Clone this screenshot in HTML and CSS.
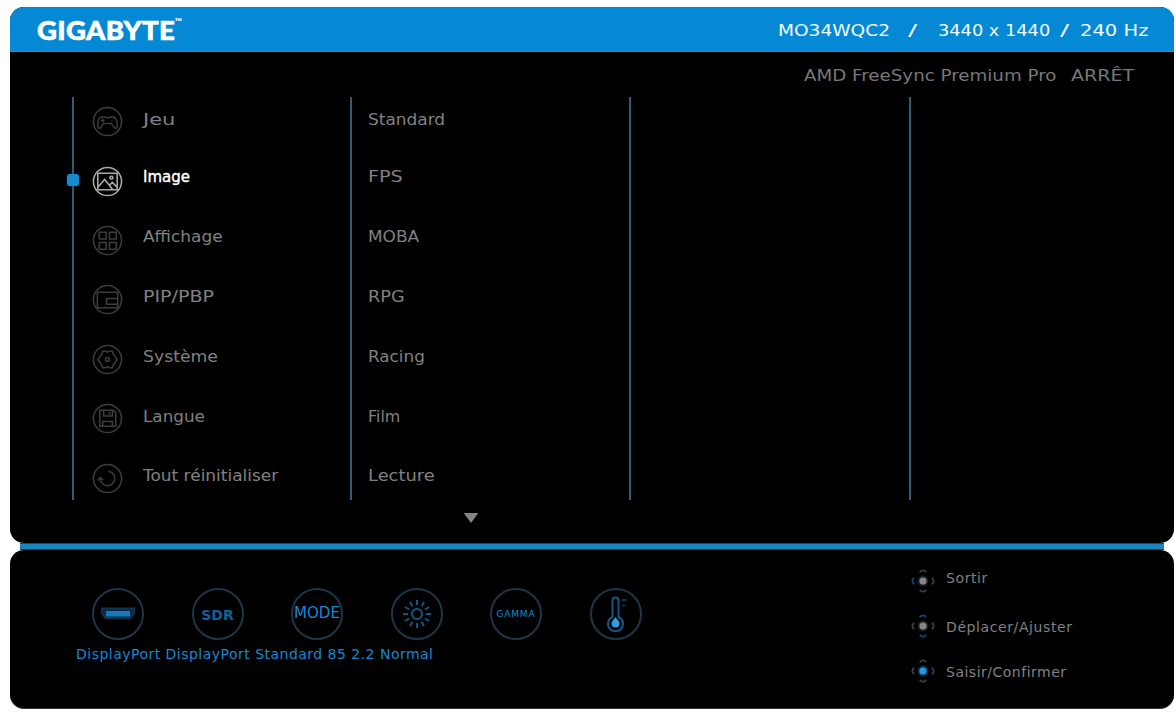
FILE: index.html
```html
<!DOCTYPE html>
<html lang="fr">
<head>
<meta charset="utf-8">
<title>GIGABYTE MO34WQC2</title>
<link rel="stylesheet" href="styles.css">
</head>
<body>
<main class="osd">
  <section class="panel">
    <header class="header">
      <div class="brand">GIGABYTE<span class="tm">™</span></div>
      <div class="signal"><span class="model">MO34WQC2</span><span class="slash">/</span><span class="res">3440 x 1440</span><span class="slash">/</span><span class="rate">240 Hz</span></div>
    </header>
    <div class="sync"><span class="sync-name">AMD FreeSync Premium Pro</span><span class="sync-state">ARRÊT</span></div>
    <div class="menu">
      <div class="col main-col">
        <i class="marker"></i>
        <div class="icons">
          <svg viewBox="0 0 32 32"><circle cx="16" cy="16" r="14.5"/><path d="M6 21c0-5 1-10 4-10 2 0 3 1 6 1s4-1 6-1c3 0 4 5 4 10 0 3-3 2-4 0l-2-3h-8l-2 3c-1 2-4 3-4 0zM9 15h4M11 13v4M20 15h1M22 13h1"/></svg>
          <svg class="on" viewBox="0 0 32 32"><circle cx="16" cy="16" r="14.5"/><path d="M6 7.500h20v17H6zM6 22l7-8 5 6 3-3 5 5M14.500 15.500l7 9"/><circle cx="20" cy="12" r="1.500"/></svg>
          <svg viewBox="0 0 32 32"><circle cx="16" cy="16" r="14.500"/><path d="M7.500 7.500h7v7h-7zM18 7.500h7v7h-7zM7.500 18h7v7h-7zM18 18h7v7h-7z"/></svg>
          <svg viewBox="0 0 32 32"><circle cx="16" cy="16" r="14.500"/><path d="M5.500 8.500h21v16h-21zM15 15h11.500v6H15z"/></svg>
          <svg viewBox="0 0 32 32"><circle cx="16" cy="16" r="14.500"/><path d="M11 7.500h3l2 1 2-1h3l1 3 4 5.500-4 5.500-1 3h-3l-2-1-2 1h-3l-1-3L6 16l4-5.500z"/><circle cx="16" cy="16" r="2"/></svg>
          <svg viewBox="0 0 32 32"><circle cx="16" cy="16" r="14.500"/><path d="M8 7.500h14l2.500 2.500v14H8zM12 7.500v6h9v-6M11 24v-5h10v5M18 9v3"/></svg>
          <svg viewBox="0 0 32 32"><circle cx="16" cy="16" r="14.500"/><path d="M17 8.500A7.500 7.500 0 1 1 8.500 16M6 18l2.500-3 3 2.500"/></svg>
        </div>
        <ul class="list labels">
          <li>Jeu</li><li class="on">Image</li><li>Affichage</li><li>PIP/PBP</li><li>Système</li><li>Langue</li><li>Tout réinitialiser</li>
        </ul>
      </div>
      <div class="col mode-col">
        <ul class="list modes">
          <li>Standard</li><li>FPS</li><li>MOBA</li><li>RPG</li><li>Racing</li><li>Film</li><li>Lecture</li>
        </ul>
      </div>
      <div class="col"></div>
      <div class="col"></div>
    </div>
    <div class="more"><svg viewBox="0 0 16 11"><path d="M0 0h16L8 11z"/></svg></div>
  </section>
  <div class="divider"></div>
  <section class="footer">
    <div class="status">
      <div class="badges">
        <div class="badge"><svg viewBox="0 0 52 52"><path class="glow" d="M10 20.500h32v5L38.500 30h-25L10 25.500z"/><path class="port" d="M15 24h22v3.500H15z"/></svg></div>
        <div class="badge sdr">SDR</div>
        <div class="badge mode">MODE</div>
        <div class="badge"><svg class="sun" viewBox="0 0 52 52"><circle cx="26" cy="26" r="5"/><path d="M26 12v5M26 35v5M12 26h5M35 26h5M19 13.900l2.500 4.300M30.500 33.800l2.500 4.300M13.900 19l4.300 2.500M33.800 30.500l4.300 2.500M13.900 33l4.300-2.500M33.800 21.500l4.300-2.500M19 38.100l2.500-4.300M30.500 18.200l2.500-4.300"/></svg></div>
        <div class="badge gamma">GAMMA</div>
        <div class="badge"><svg class="therm" viewBox="0 0 52 52"><path d="M22.500 29V12.500a3 3 0 0 1 6 0V29a7.500 7.500 0 1 1-6 0z"/><path class="faint" d="M32 12h5M32 17.500h3"/><path class="drop" d="M25.500 29c2 3 4 4 4 6.500a4 4 0 0 1-8 0c0-2.500 2-3.500 4-6.500z"/></svg></div>
      </div>
      <div class="values">DisplayPort DisplayPort Standard 85 2.2 Normal</div>
    </div>
    <ul class="keys">
      <li><svg viewBox="0 0 28 28"><circle cx="14" cy="14" r="4.800"/><path d="M10.500 4.500q3.500-4 7 0M10.500 23.500q3.500 4 7 0M23.500 10.500q4 3.500 0 7"/><path class="lit" d="M4.500 10.500q-4 3.500 0 7"/></svg><span>Sortir</span></li>
      <li><svg viewBox="0 0 28 28"><circle cx="14" cy="14" r="4.800"/><path d="M4.500 10.500q-4 3.500 0 7M23.500 10.500q4 3.500 0 7"/><path class="lit" d="M10.500 4.500q3.500-4 7 0M10.500 23.500q3.500 4 7 0"/></svg><span>Déplacer/Ajuster</span></li>
      <li><svg viewBox="0 0 28 28"><circle class="ok" cx="14" cy="14" r="4.800"/><path d="M10.500 4.500q3.500-4 7 0M10.500 23.500q3.500 4 7 0M23.500 10.500q4 3.500 0 7M4.500 10.500q-4 3.500 0 7"/></svg><span>Saisir/Confirmer</span></li>
    </ul>
  </section>
</main>
</body>
</html>
```
FILE: styles.css
```css
* { box-sizing: border-box; }
body { margin: 0; background: #fff; font-family: "DejaVu Sans", sans-serif; color: #808080; }
ul { margin: 0; padding: 0; list-style: none; }
span, li, .badge, .values { white-space: nowrap; }
svg { display: block; fill: none; }

.osd { width: 1176px; height: 712px; padding: 7px 2px 3px 10px; overflow: hidden; }
.panel { height: 536px; background: #000; border-radius: 14px; overflow: hidden; }
.header { height: 45px; padding: 0 26px 0 27px; background: #0589d5; border-bottom: 1px solid #3d88b0; display: flex; justify-content: space-between; align-items: center; color: #fff; }
.brand { display: flex; padding-top: 1px; font: 900 26px/30px Lato, sans-serif; letter-spacing: .3px; transform: scaleX(1.06); transform-origin: left; -webkit-text-stroke: .6px #fff; }
.tm { font-size: 9px; line-height: 13px; -webkit-text-stroke: 0; }
.signal { display: flex; padding-top: 4px; font-size: 16px; line-height: 20px; color: #f4faff; }
.signal span, .sync span, .list li { transform-origin: left; }
.model { width: 130px; transform: scaleX(1.16); }
.slash { width: 30px; transform: scaleX(1.7); }
.res { width: 122px; transform: scaleX(1.11); }
.res + .slash { width: 20px; }
.rate { width: 68px; transform: scaleX(1.22); }

.sync { height: 39px; padding: 14px 39px 0 0; display: flex; justify-content: flex-end; font-size: 16px; line-height: 20px; color: #777; }
.sync-name { width: 267px; transform: scaleX(1.14); }
.sync-state { width: 64px; transform: scaleX(1.19); }

.menu { margin: 6px 0 0 62px; height: 403px; display: grid; grid-template: 403px / 278px 279px 280px 1fr; }
.col { border-left: 2px solid #315c78; }
.main-col { position: relative; display: flex; padding-left: 18px; }
.marker { position: absolute; left: -7px; top: 77px; width: 12px; height: 12px; border-radius: 3px; background: #178bd0; box-shadow: 0 0 3px #0a3c60; }
.icons { width: 51px; margin-top: -5px; display: grid; grid-auto-rows: 59.4px; align-content: start; align-items: center; }
.icons svg { width: 31px; height: 31px; stroke: #3c3c3c; stroke-width: 1.6; }
.icons svg.on { stroke: #aaa; }
.list { margin-top: -5px; display: grid; grid-template-rows: 55px repeat(6, 59.9px); align-content: start; align-items: center; font-size: 15px; line-height: 20px; }
.list li { justify-self: start; }
.list .on { color: #fff; -webkit-text-stroke: .4px #fff; }
.mode-col { padding-left: 16px; }
.labels li:nth-child(1) { transform: scaleX(1.4); }
.labels li:nth-child(3) { transform: scaleX(1.13); }
.labels li:nth-child(4) { transform: scaleX(1.27); }
.labels li:nth-child(5) { transform: scaleX(1.15); }
.labels li:nth-child(6) { transform: scaleX(1.12); }
.labels li:nth-child(7) { transform: scaleX(1.13); }
.modes li:nth-child(1) { transform: scaleX(1.13); }
.modes li:nth-child(2) { transform: scaleX(1.28); }
.modes li:nth-child(3) { transform: scaleX(1.13); }
.modes li:nth-child(4) { transform: scaleX(1.18); }
.modes li:nth-child(5) { transform: scaleX(1.12); }
.modes li:nth-child(6) { transform: scaleX(1.06); }
.modes li:nth-child(7) { transform: scaleX(1.19); }
.more { padding: 13px 0 0 453px; }
.more svg { width: 16px; height: 10px; fill: #858585; }

.divider { height: 7px; margin: 0 10px; background: #1b84bd; border: solid #084a75; border-width: 1px 0; }
.footer { height: 159px; background: #000; border-radius: 14px; border-bottom: 1px solid #333; display: flex; justify-content: space-between; }
.status { padding: 38px 0 0 66px; color: #1688d2; }
.badges { display: flex; gap: 47.5px; padding-left: 16px; }
.badge { width: 52px; height: 52px; border: 2px solid #1c3646; border-radius: 50%; display: flex; align-items: center; justify-content: center; flex: none; }
.badge svg { width: 52px; height: 52px; flex: none; stroke: #135784; stroke-width: 2; }
.badge .glow { fill: #082b45; stroke: #0c3450; }
.badge .port { fill: #1979b7; stroke: #1979b7; }
.badge .faint { stroke: #0b3048; }
.badge .drop { fill: #2c9fe5; stroke: none; }
.sdr { font-size: 14px; font-weight: bold; color: #11619a; padding-top: 2px; }
.mode { font-size: 15px; padding-bottom: 3px; }
.gamma { font-size: 9px; letter-spacing: .8px; padding-bottom: 1px; }
.values { margin-top: 5px; font-size: 14px; line-height: 18px; letter-spacing: .48px; }
.keys { width: 264px; padding-top: 15px; display: grid; grid-template-rows: 31px 59px 32px; }
.keys li { display: flex; align-items: center; gap: 10px; font-size: 14px; line-height: 18px; letter-spacing: .6px; }
.keys li:nth-child(1) span { margin-top: -5px; }
.keys li:nth-child(2) span { margin-top: 3px; }
.keys li:nth-child(3) span { margin-top: 1px; letter-spacing: .5px; }
.keys svg { width: 26px; height: 26px; stroke: #3c3c3c; stroke-width: 2; }
.keys circle { fill: #858585; stroke: #222; }
.keys .ok { fill: #2397e2; stroke: #073454; }
.keys .lit { stroke: #0b4570; }
```
